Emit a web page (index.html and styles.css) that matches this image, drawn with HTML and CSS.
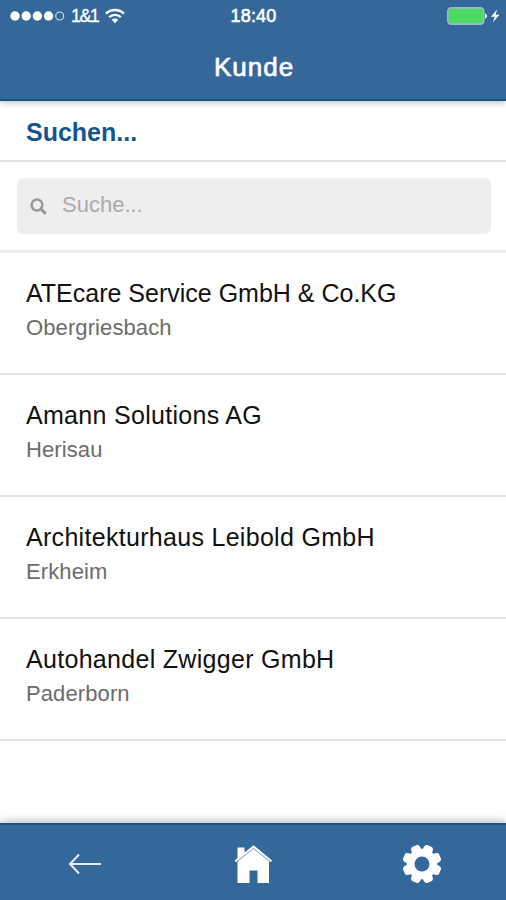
FILE: index.html
```html
<!DOCTYPE html>
<html lang="de">

<head>
<meta charset="UTF-8">
<meta name="viewport" content="width=device-width, initial-scale=1.0">
<title>Kunde</title>
<link rel="stylesheet" href="styles.css">
</head>

<body>
<div class="app">
	<header class="header">
		<div class="status-bar">
			<div class="status-left">
				<svg class="signal" width="55" height="12" viewBox="0 0 55 12">
					<g fill="#fff">
						<circle cx="5" cy="6" r="4.7" />
						<circle cx="16.2" cy="6" r="4.7" />
						<circle cx="27.4" cy="6" r="4.7" />
						<circle cx="38.5" cy="6" r="4.7" />
					</g>
					<circle cx="49.7" cy="6" r="4" fill="none" stroke="#d3e0ed" stroke-width="1.1" />
				</svg>
				<span class="carrier">1&amp;1</span>
				<svg class="wifi" width="20" height="16" viewBox="0 0 20 16">
					<g fill="none" stroke="#fff" stroke-width="2.4">
						<path d="M1 5.6a13 13 0 0 1 18 0" />
						<path d="M4.2 9.2a8.3 8.3 0 0 1 11.6 0" />
					</g>
					<path d="M10 15.2l-3.2-3.4a4.6 4.6 0 0 1 6.4 0z" fill="#fff" />
				</svg>
			</div>
			<span class="clock">18:40</span>
			<div class="status-right">
				<svg width="53" height="18" viewBox="0 0 53 18">
					<rect x="0.8" y="0.9" width="36" height="16.2" rx="3.5" fill="#4cd964" stroke="#9fb9c9" stroke-width="1.6" />
					<path d="M38 6.2q2 .6 2 2.8t-2 2.8z" fill="#fff" />
					<path d="M50.2 2.3L44 9.8h3.8l-2.2 5.6 7-7.6h-4.1z" fill="#fff" />
				</svg>
			</div>
		</div>
		<h1 class="title">Kunde</h1>
	</header>

	<main class="content">
		<h2 class="section-title">Suchen...</h2>
		<div class="search">
			<label class="search-box">
				<svg width="17" height="18" viewBox="0 0 17 18" fill="none" stroke="#999">
					<circle cx="7" cy="8" r="5.4" stroke-width="2.5" />
					<path d="M11 12l3.8 3.8" stroke-width="3.1" stroke-linecap="round" />
				</svg>
				<input class="search-input" type="text" placeholder="Suche...">
			</label>
		</div>
		<ul class="list">
			<li class="row">
				<div class="name name-long">ATEcare Service GmbH &amp; Co.KG</div>
				<div class="city">Obergriesbach</div>
			</li>
			<li class="row">
				<div class="name">Amann Solutions AG</div>
				<div class="city">Herisau</div>
			</li>
			<li class="row">
				<div class="name">Architekturhaus Leibold GmbH</div>
				<div class="city">Erkheim</div>
			</li>
			<li class="row">
				<div class="name">Autohandel Zwigger GmbH</div>
				<div class="city">Paderborn</div>
			</li>
		</ul>
	</main>

	<nav class="tab-bar">
		<a class="tab">
			<svg width="34" height="22" viewBox="0 0 34 22" fill="none" stroke="#e3edf8" stroke-width="2">
				<path d="M3 11H34M12 1.5L3 11l9 9.5" />
			</svg>
		</a>
		<a class="tab">
			<svg width="40" height="40" viewBox="0 0 40 40">
				<path d="M4.500 3.500h7v5L20.500 1.200 39 16.500l-1.300 1.800-1.700-1.200V39H24.500V26.500h-8V39h-12V17.100l-1.600 1.200-1.300-1.800 2.900-2.500z" fill="#fff" />
				<path d="M3.500 18L20.500 4.500l17 13.500" fill="none" stroke="#6f97bd" stroke-width="1" />
			</svg>
		</a>
		<a class="tab">
			<svg width="40" height="40" viewBox="-20 -20 40 40">
				<defs>
					<path id="tooth" d="M-5.800-13Q-4.900-14.500-4.500-17.600Q-4.100-19.400-2.500-19.500H2.500Q4.100-19.400 4.500-17.600Q4.900-14.500 5.800-13z" />
				</defs>
				<g fill="#fff">
					<circle r="14.800" />
					<use href="#tooth" transform="rotate(22.5)" />
					<use href="#tooth" transform="rotate(67.5)" />
					<use href="#tooth" transform="rotate(112.5)" />
					<use href="#tooth" transform="rotate(157.5)" />
					<use href="#tooth" transform="rotate(202.5)" />
					<use href="#tooth" transform="rotate(247.5)" />
					<use href="#tooth" transform="rotate(292.5)" />
					<use href="#tooth" transform="rotate(337.5)" />
				</g>
				<circle r="7.5" fill="#34689b" />
			</svg>
		</a>
	</nav>
</div>
</body>

</html>
```

FILE: styles.css
```css
* {
	box-sizing: border-box;
}

body {
	font-family: "Liberation Sans", Arial, sans-serif;
	background-color: #fff;
	margin: 0;
}

.app {
	display: flex;
	flex-direction: column;
	height: 900px;
}

.header {
	height: 101px;
	background-color: #34689b;
	border-bottom: 2px solid #145489;
	box-shadow: 0 1px 7px rgba(0, 0, 0, 0.3);
	color: #fff;
}

.status-bar {
	display: grid;
	grid-template-columns: 1fr auto 1fr;
	align-items: center;
	height: 32px;
	padding: 0 6px 0 10px;
}

.status-left {
	display: flex;
	align-items: center;
}

.carrier {
	margin-left: 6px;
	font-size: 18px;
	letter-spacing: -1.6px;
	-webkit-text-stroke: 0.3px #fff;
}

.wifi {
	margin-left: 7px;
}

.clock {
	margin-right: 3px;
	font-size: 18px;
	letter-spacing: 0.2px;
	-webkit-text-stroke: 0.6px #fff;
}

.status-right {
	display: flex;
	justify-content: flex-end;
}

.title {
	margin: 0;
	padding: 19px 0 0 2px;
	font-size: 26px;
	font-weight: normal;
	line-height: 32px;
	letter-spacing: 1px;
	text-align: center;
	-webkit-text-stroke: 0.7px #fff;
}

.content {
	flex: 1;
}

.section-title {
	height: 61px;
	margin: 0;
	padding: 16px 26px 0;
	border-bottom: 2px solid #e4e4e4;
	color: #145590;
	font-size: 25px;
	line-height: 30px;
}

.search {
	height: 91px;
	padding: 16px 15px 0 17px;
	border-bottom: 3px solid #eee;
}

.search-box {
	display: flex;
	align-items: center;
	height: 56px;
	padding-left: 13px;
	border-radius: 6px;
	background-color: #eee;
}

.search-input {
	flex: 1;
	margin-left: 15px;
	padding: 0 0 2px;
	border: none;
	outline: none;
	background: none;
	font-family: inherit;
	font-size: 22px;
}

.search-input::placeholder {
	color: #aaa;
}

.list {
	margin: 0;
	padding: 0;
	list-style: none;
}

.row {
	height: 122px;
	padding: 25px 26px 0;
	border-bottom: 2px solid #e2e2e2;
}

.name {
	color: #111;
	font-size: 25px;
	line-height: 30px;
	letter-spacing: 0.3px;
}

.name-long {
	letter-spacing: 0;
}

.city {
	margin-top: 6px;
	color: #6c6c6c;
	font-size: 22px;
	line-height: 28px;
	letter-spacing: 0.1px;
}

.tab-bar {
	display: grid;
	grid-template-columns: repeat(3, 1fr);
	height: 77px;
	padding-top: 3px;
	background-color: #34689b;
	border-top: 2px solid #1d5482;
	box-shadow: 0 -2px 8px rgba(0, 0, 0, 0.26);
}

.tab {
	display: flex;
	align-items: center;
	justify-content: center;
}
```
